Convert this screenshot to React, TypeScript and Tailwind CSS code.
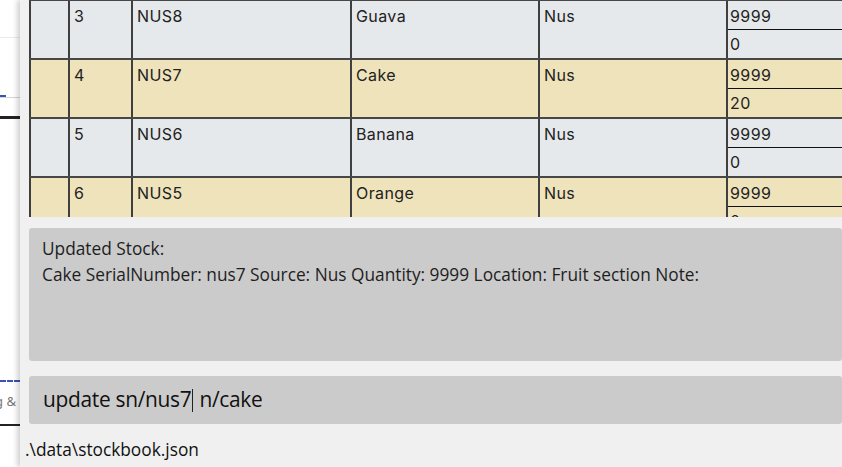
const rows = [
  { idx: '3', sn: 'NUS8', name: 'Guava', src: 'Nus', qty: '9999', low: '0', tint: 'bg-[#e6e9eb]' },
  { idx: '4', sn: 'NUS7', name: 'Cake', src: 'Nus', qty: '9999', low: '20', tint: 'bg-[#efe3bb]' },
  { idx: '5', sn: 'NUS6', name: 'Banana', src: 'Nus', qty: '9999', low: '0', tint: 'bg-[#e6e9eb]' },
  { idx: '6', sn: 'NUS5', name: 'Orange', src: 'Nus', qty: '9999', low: '0', tint: 'bg-[#efe3bb]' },
];

const cell = 'border-l-2 border-[#3f3f3f] pl-[4px] pt-[3px]';

function StockRow({ r }: { r: (typeof rows)[number] }) {
  return (
    <div
      className={`grid grid-cols-[39px_63px_219px_188px_188px_200px] h-[59px] border-b-2 border-[#474747] ${r.tint}`}
    >
      <div className={cell}></div>
      <div className={`${cell} pl-[2px]`}>{r.idx}</div>
      <div className={cell}>{r.sn}</div>
      <div className={cell}>{r.name}</div>
      <div className={cell}>{r.src}</div>
      {/* quantity + low stock split */}
      <div className="border-l-2 border-[#3f3f3f] flex flex-col">
        <div className="h-[29px] pl-[2px] pt-[3px] border-b border-[#111]">{r.qty}</div>
        <div className="pl-[2px] pt-[2px]">{r.low}</div>
      </div>
    </div>
  );
}

export default function App() {
  return (
    <div className="flex w-[842px] h-[467px] overflow-hidden bg-white">
      {/* window behind, only a sliver shows */}
      <div className="w-[20px] shrink-0 flex flex-col bg-white text-[#777]">
        <div className="h-[37px]"></div>
        <div className="h-px bg-[#ececec]"></div>
        <div className="h-[57px]"></div>
        <div className="h-[2px] w-[6px] bg-[#3f51b5]"></div>
        <div className="h-px bg-[#d4d4d4]"></div>
        <div className="h-[18px]"></div>
        <div className="h-[3px] bg-[#222]"></div>
        <div className="h-[261px]"></div>
        <div className="border-t-2 border-dashed border-[#3f51b5]"></div>
        <div className="h-[11px]"></div>
        <div className="-ml-[5px] whitespace-nowrap text-[13px] leading-[16px] font-['Noto_Sans',sans-serif]">g &amp;</div>
        <div className="h-[15px]"></div>
        <div className="h-[2px] bg-[#222]"></div>
      </div>

      {/* main window */}
      <div className="flex-1 min-w-0 bg-[#f0f0f0] pl-[9px] flex flex-col shadow-[-3px_0_5px_rgba(0,0,0,0.18)]">
        <div className="h-[217px] overflow-hidden shrink-0">
          <div className="-mt-[1px] border-t-2 border-[#474747] text-[16px] leading-[24px] tracking-[0.4px] text-[#222] font-['Inter',sans-serif] w-[917px]">
            {rows.map((r) => (
              <StockRow key={r.idx} r={r} />
            ))}
          </div>
        </div>

        <div className="mt-[11px] h-[133px] shrink-0 rounded-[3px] bg-[#cbcbcb] pl-[13px] pt-[8px] text-[17.3px] leading-[26px] text-[#1e1e1e] font-['Open_Sans',sans-serif] whitespace-nowrap">
          <div>Updated Stock:</div>
          <div>Cake SerialNumber: nus7 Source: Nus Quantity: 9999 Location: Fruit section Note:</div>
        </div>

        <div className="mt-[15px] h-[48px] shrink-0 rounded-[3px] bg-[#cbcbcb] pl-[14px] flex items-center text-[20.9px] text-[#111] font-['Open_Sans',sans-serif] tracking-[-0.3px] whitespace-nowrap">
          <span>update sn/nus7</span>
          <span className="inline-block w-px h-[23px] bg-[#222] mx-[1px]"></span>
          <span>&nbsp;n/cake</span>
        </div>

        <div className="-ml-[4px] mt-[14px] text-[17.3px] leading-[24px] text-[#111] font-['Open_Sans',sans-serif]">
          .\data\stockbook.json
        </div>
      </div>
    </div>
  );
}
